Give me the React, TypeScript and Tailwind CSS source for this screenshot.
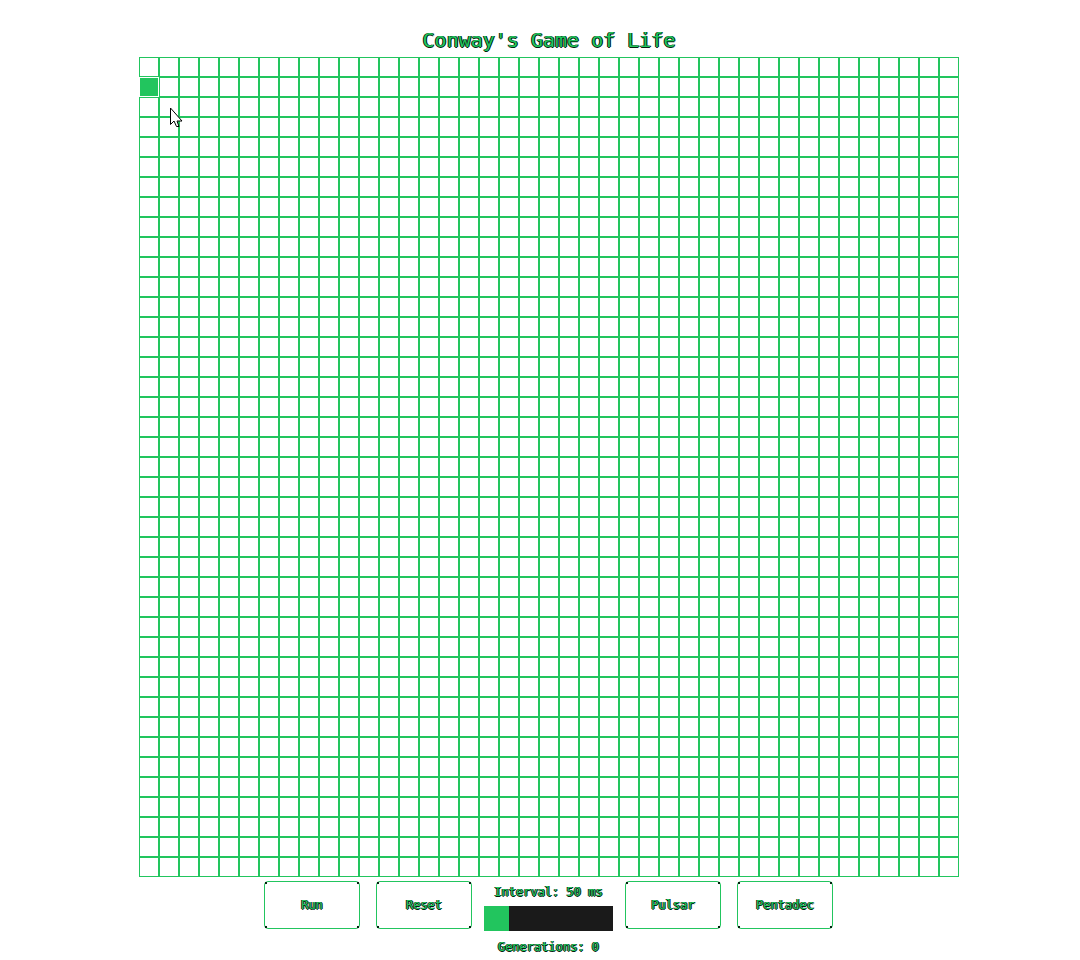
import { useEffect, useState } from "react";

const SIZE = 41;
const CELLS = Array.from({ length: SIZE * SIZE }, (_, i) => i);

function step(alive: Set<number>): Set<number> {
  const counts = new Map<number, number>();
  alive.forEach((i) => {
    const r = Math.floor(i / SIZE);
    const c = i % SIZE;
    for (let dr = -1; dr <= 1; dr++) {
      for (let dc = -1; dc <= 1; dc++) {
        const nr = r + dr;
        const nc = c + dc;
        if ((dr === 0 && dc === 0) || nr < 0 || nc < 0 || nr >= SIZE || nc >= SIZE) continue;
        const k = nr * SIZE + nc;
        counts.set(k, (counts.get(k) ?? 0) + 1);
      }
    }
  });
  const next = new Set<number>();
  counts.forEach((n, k) => {
    if (n === 3 || (n === 2 && alive.has(k))) next.add(k);
  });
  return next;
}

function pulsar(): Set<number> {
  const cells = new Set<number>();
  const mid = 20;
  for (const a of [-6, -1, 1, 6]) {
    for (const b of [-4, -3, -2, 2, 3, 4]) {
      cells.add((mid + a) * SIZE + mid + b);
      cells.add((mid + b) * SIZE + mid + a);
    }
  }
  return cells;
}

function pentadec(): Set<number> {
  return new Set(Array.from({ length: 10 }, (_, i) => 20 * SIZE + 16 + i));
}

const outline = "[text-shadow:-1px_0_#03210f,1px_0_#03210f,0_1px_#03210f]";

function ActionButton({ label, onClick }: { label: string; onClick: () => void }) {
  return (
    <button
      type="button"
      onClick={onClick}
      className={`relative h-12 w-24 rounded border border-[#22c55e] bg-white text-xs ${outline}`}
    >
      <span className="absolute top-0 left-0 size-[2px] bg-[#03210f]" />
      <span className="absolute top-0 right-0 size-[2px] bg-[#03210f]" />
      <span className="absolute bottom-0 left-0 size-[2px] bg-[#03210f]" />
      <span className="absolute right-0 bottom-0 size-[2px] bg-[#03210f]" />
      {label}
    </button>
  );
}

export default function App() {
  const [alive, setAlive] = useState<Set<number>>(() => new Set([SIZE]));
  const [running, setRunning] = useState(false);
  const [delay, setDelay] = useState(50);
  const [generation, setGeneration] = useState(0);

  useEffect(() => {
    if (!running) return;
    const id = setInterval(() => {
      setAlive(step);
      setGeneration((g) => g + 1);
    }, delay);
    return () => clearInterval(id);
  }, [running, delay]);

  const load = (cells: Set<number>) => {
    setRunning(false);
    setAlive(cells);
    setGeneration(0);
  };

  const toggle = (i: number) =>
    setAlive((prev) => {
      const next = new Set(prev);
      if (!next.delete(i)) next.add(i);
      return next;
    });

  return (
    <main className="relative flex min-h-screen flex-col items-center bg-white pt-6 pl-[18px] font-['DejaVu_Sans_Mono',monospace] text-[#22c55e]">
      <h1 className={`mb-px text-xl leading-8 ${outline}`}>Conway's Game of Life</h1>
      <div className="grid grid-cols-[repeat(41,20px)] auto-rows-[20px]">
        {CELLS.map((i) => (
          <button
            key={i}
            type="button"
            aria-label={`Row ${Math.floor(i / SIZE) + 1}, column ${(i % SIZE) + 1}`}
            aria-pressed={alive.has(i)}
            onClick={() => toggle(i)}
            className={alive.has(i) ? "border border-white bg-[#22c55e]" : "border border-[#22c55e] bg-white"}
          />
        ))}
      </div>
      <div className="flex items-start pt-1 pr-px">
        <div className="flex gap-4">
          <ActionButton label={running ? "Stop" : "Run"} onClick={() => setRunning(!running)} />
          <ActionButton label="Reset" onClick={() => load(new Set())} />
        </div>
        <div className="mx-3 flex flex-col items-center text-xs">
          <label htmlFor="interval" className={`pt-[3px] leading-4 ${outline}`}>
            Interval: {delay} ms
          </label>
          <input
            id="interval"
            type="range"
            min={50}
            max={1000}
            step={50}
            value={delay}
            onChange={(e) => setDelay(Number(e.target.value))}
            className="mt-[6px] h-[25px] w-[129px] appearance-none bg-[#1a1a1a] [&::-webkit-slider-thumb]:h-[25px] [&::-webkit-slider-thumb]:w-[25px] [&::-webkit-slider-thumb]:appearance-none [&::-webkit-slider-thumb]:bg-[#22c55e]"
          />
          <p className={`mt-2 leading-4 ${outline}`}>Generations: {generation}</p>
        </div>
        <div className="flex gap-4">
          <ActionButton label="Pulsar" onClick={() => load(pulsar())} />
          <ActionButton label="Pentadec" onClick={() => load(pentadec())} />
        </div>
      </div>
      <svg
        aria-hidden="true"
        className="pointer-events-none absolute top-[107px] left-[170px] h-[21px] w-[13px]"
        viewBox="0 0 13 21"
      >
        <path d="M.5 1v16.5l3.5-3.5 2.5 5.5h2.5l-2-5.5h5z" fill="white" stroke="black" />
      </svg>
    </main>
  );
}
